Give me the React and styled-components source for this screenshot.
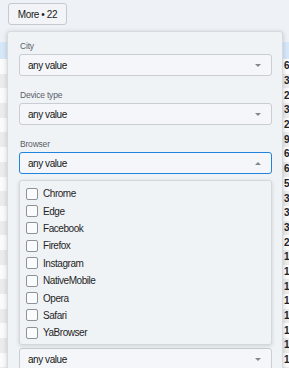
import React from 'react'
import styled, {createGlobalStyle} from 'styled-components'

const GlobalStyle = createGlobalStyle`
    html, body {
        margin: 0;
        padding: 0;
        overflow: hidden;
        background: #eef1f5;
        font-family: "Liberation Sans", Arial, sans-serif;
    }
`

const counts = [6412, 3871, 2950, 3104, 2287, 9120, 6034, 6511, 5290, 3345, 3012, 3460, 2718, 1904, 1822, 1765, 1640, 1533, 1418, 1377, 1251, 1190]

const fields = ['City', 'Device type', 'Browser', 'OS', 'Screen', 'Language', 'Referrer']

const browsers = ['Chrome', 'Edge', 'Facebook', 'Firefox', 'Instagram', 'NativeMobile', 'Opera', 'Safari', 'YaBrowser']

export default function App() {
    return (
        <Page>
            <GlobalStyle />
            <Toolbar>
                <MoreButton>More • 22</MoreButton>
            </Toolbar>

            <Table>
                <HeaderRow />
                {counts.map((c, i) => (
                    <Row key={i} striped={i % 2 === 1}>
                        <NameCell />
                        <CountCell>{c}</CountCell>
                    </Row>
                ))}
            </Table>

            <Popover>
                {fields.map(name => (
                    <Field key={name}>
                        <Label>{name}</Label>
                        <Select focused={name === 'Browser'}>
                            <span>any value</span>
                            <Caret up={name === 'Browser'} />
                        </Select>
                        {name === 'Browser' &&
                            <OptionList>
                                {browsers.map(b => (
                                    <Option key={b}>
                                        <Checkbox />
                                        {b}
                                    </Option>
                                ))}
                            </OptionList>
                        }
                    </Field>
                ))}
            </Popover>
        </Page>
    )
}

const Page = styled.div`
    position: relative;
    width: 289px;
    height: 368px;
    overflow: hidden;
`
const Toolbar = styled.div`
    height: 42px;
    padding: 3px 0 0 8px;
    box-sizing: border-box;
`
const MoreButton = styled.div`
    display: inline-flex;
    align-items: center;
    justify-content: center;
    width: 59px;
    height: 22px;
    box-sizing: border-box;
    border: 1px solid #c5cad1;
    border-radius: 3px;
    background: #f2f4f7;
    font-size: 10px;
    letter-spacing: -0.4px;
    color: #1a1a1a;
`
const Table = styled.div`
    display: flex;
    flex-direction: column;
`
const HeaderRow = styled.div`
    height: 17px;
    background: #d6e8f8;
`
const Row = styled.div`
    display: grid;
    grid-template-columns: 284px 60px;
    align-items: center;
    height: 14.7px;
    background: ${props => props.striped ? '#ececec' : '#fbfbfb'};
`
const NameCell = styled.div``
const CountCell = styled.div`
    font-size: 10px;
    font-weight: bold;
    color: #222;
    line-height: 1;
`
const Popover = styled.div`
    position: absolute;
    top: 31px;
    left: 7px;
    width: 276px;
    box-sizing: border-box;
    padding: 8px 10px 20px 11px;
    background: #f0f3f6;
    border: 1px solid #d6dbe1;
    border-radius: 3px;
    box-shadow: 0 1px 5px rgba(0, 0, 0, 0.18);
`
const Field = styled.div`
    position: relative;
    display: flex;
    flex-direction: column;
    gap: 2px;
    margin-bottom: 13px;
`
const Label = styled.div`
    height: 12px;
    line-height: 12px;
    font-size: 8.5px;
    letter-spacing: -0.2px;
    color: #5a6068;
    padding-left: 1px;
`
const Select = styled.div`
    display: flex;
    align-items: center;
    justify-content: space-between;
    height: 22px;
    box-sizing: border-box;
    padding: 0 8px 0 8px;
    border: 1px solid ${props => props.focused ? '#1f84de' : '#c9ced5'};
    border-radius: 3px;
    background: #f4f6f9;
    font-size: 10px;
    letter-spacing: -0.45px;
    color: #161616;
`
const Caret = styled.span`
    width: 0;
    height: 0;
    margin-right: 2px;
    border-left: 3.5px solid transparent;
    border-right: 3.5px solid transparent;
    ${props => props.up
        ? 'border-bottom: 3.5px solid #80878f;'
        : 'border-top: 3.5px solid #80878f;'}
`
const OptionList = styled.div`
    position: absolute;
    top: 42px;
    left: 0;
    right: 0;
    z-index: 5;
    height: 165px;
    box-sizing: border-box;
    padding: 4px 0 4px 6px;
    background: #f0f3f6;
    border: 1px solid #d3d8de;
    border-radius: 3px;
    box-shadow: 0 1px 4px rgba(0, 0, 0, 0.14);
`
const Option = styled.div`
    display: flex;
    align-items: center;
    gap: 5px;
    height: 17.4px;
    font-size: 10px;
    letter-spacing: -0.45px;
    color: #1f1f1f;
`
const Checkbox = styled.span`
    width: 12px;
    height: 12px;
    box-sizing: border-box;
    border: 1px solid #8d9298;
    border-radius: 2px;
    background: #fafbfc;
`
